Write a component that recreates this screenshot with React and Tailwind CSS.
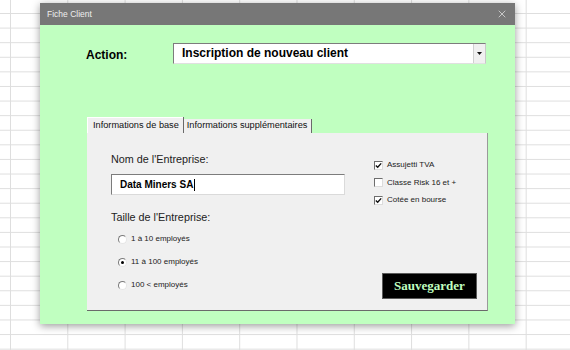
import { X } from "lucide-react";

const sizes = ["1 à 10 employés", "11 à 100 employés", "100 < employés"];
const options = [
  { label: "Assujetti TVA", checked: true },
  { label: "Classe Risk 16 et +", checked: false },
  { label: "Cotée en bourse", checked: true },
];

function Radio({ label, checked }) {
  return (
    <div className="flex h-[12px] items-center gap-[4px]">
      <span className="relative flex h-[9px] w-[9px] items-center justify-center rounded-full border border-t-[#7a7a7a] border-l-[#7a7a7a] border-r-[#e6e6e6] border-b-[#e6e6e6] bg-white">
        {checked && <span className="h-[3px] w-[3px] rounded-full bg-black" />}
      </span>
      <span className="text-[8px] leading-none text-[#222]">{label}</span>
    </div>
  );
}

function Check({ label, checked }) {
  return (
    <div className="flex h-[12px] items-center gap-[4px]">
      <span className="flex h-[9px] w-[9px] items-center justify-center border border-t-[#6d6d6d] border-l-[#6d6d6d] border-r-[#dcdcdc] border-b-[#dcdcdc] bg-white">
        {checked && (
          <svg width="7" height="7" viewBox="0 0 7 7">
            <path d="M0.8 3.4 L2.7 5.3 L6.2 1.4" fill="none" stroke="#111" strokeWidth="1.4" />
          </svg>
        )}
      </span>
      <span className="text-[8px] leading-none text-[#222]">{label}</span>
    </div>
  );
}

export default function App() {
  return (
    <div
      className="relative h-[350px] w-[570px] overflow-hidden bg-white pl-[40px] pt-[3px] bg-[linear-gradient(to_right,#dedede_1px,transparent_1px),linear-gradient(to_bottom,#dedede_1px,transparent_1px)] [background-size:57.3px_14.6px] [background-position:10px_13px]"
      style={{ fontFamily: '"Liberation Sans", Arial, sans-serif' }}
    >
      <div className="flex h-[321px] w-[475px] flex-col shadow-[0_2px_8px_rgba(0,0,0,0.4)]">
        {/* title bar */}
        <div className="flex h-[22px] items-center justify-between bg-[#777777] pl-[7px] pr-[7px]">
          <span className="text-[8.5px] text-[#eeeeee]">Fiche Client</span>
          <X size={12} strokeWidth={1.5} className="text-[#e2e2e2]" />
        </div>

        <div className="flex flex-1 flex-col bg-[#c0ffc0]">
          {/* action row */}
          <div className="mt-[18px] flex items-center pl-[46px]">
            <span className="w-[87px] pt-[3px] text-[12px] font-bold text-black">Action:</span>
            <div className="flex h-[21px] w-[313px] border border-t-[#7c7c7c] border-l-[#7c7c7c] border-r-[#c8c8c8] border-b-[#e0e0e0] bg-white">
              <span className="flex-1 pl-[8px] pt-[1px] text-[12px] font-bold leading-[17px] text-black">
                Inscription de nouveau client
              </span>
              <span className="flex w-[12px] items-center justify-center border-l border-[#d0d0d0] bg-[#f0f0f0]">
                <svg width="5" height="3" viewBox="0 0 5 3">
                  <path d="M0 0 H5 L2.5 3 Z" fill="#111" />
                </svg>
              </span>
            </div>
          </div>

          {/* tabs */}
          <div className="ml-[47px] mt-[53px] flex h-[16px] items-end">
            <div className="flex h-[16px] items-center border-l border-t border-white bg-[#f0f0f0] pl-[5px] pr-[4px]">
              <span className="text-[9.2px] text-[#111]">Informations de base</span>
            </div>
            <div className="h-[16px] w-px bg-[#6a6a6a]" />
            <div className="flex h-[14px] items-center bg-[#f0f0f0] pl-[3px] pr-[4px]">
              <span className="text-[9.2px] text-[#111]">Informations supplémentaires</span>
            </div>
            <div className="h-[14px] w-px bg-[#6a6a6a]" />
          </div>

          {/* panel */}
          <div className="ml-[47px] flex h-[178px] w-[401px] border-b border-r border-b-[#6a6a6a] border-r-[#9a9a9a] bg-[#f0f0f0]">
            <div className="flex w-[287px] flex-col pl-[24px] pt-[19px]">
              <span className="h-[14px] text-[10.8px] leading-[14px] text-[#222]">Nom de l'Entreprise:</span>
              <div className="mt-[8px] flex h-[21px] w-[234px] items-center border border-t-[#7c7c7c] border-l-[#7c7c7c] border-r-[#dadada] border-b-[#dadada] bg-white pl-[8px]">
                <span className="text-[10px] font-bold text-black">Data Miners SA</span>
                <span className="ml-px h-[12px] w-px bg-black" />
              </div>
              <span className="mt-[15px] h-[14px] text-[10.8px] leading-[14px] text-[#222]">Taille de l'Entreprise:</span>
              <div className="ml-[7px] mt-[9px] flex flex-col gap-[11px]">
                {sizes.map((s, i) => (
                  <Radio key={s} label={s} checked={i === 1} />
                ))}
              </div>
            </div>

            <div className="flex flex-1 flex-col pb-[11px] pt-[26px]">
              <div className="flex flex-col gap-[5.5px]">
                {options.map((o) => (
                  <Check key={o.label} label={o.label} checked={o.checked} />
                ))}
              </div>
              <button
                className="ml-[8px] mt-auto flex h-[26px] w-[95px] items-center justify-center border border-[#5a5a5a] bg-black text-[13px] font-bold text-[#c0ffc0]"
                style={{ fontFamily: '"Liberation Serif", "Times New Roman", serif' }}
              >
                Sauvegarder
              </button>
            </div>
          </div>
        </div>
      </div>
    </div>
  );
}
